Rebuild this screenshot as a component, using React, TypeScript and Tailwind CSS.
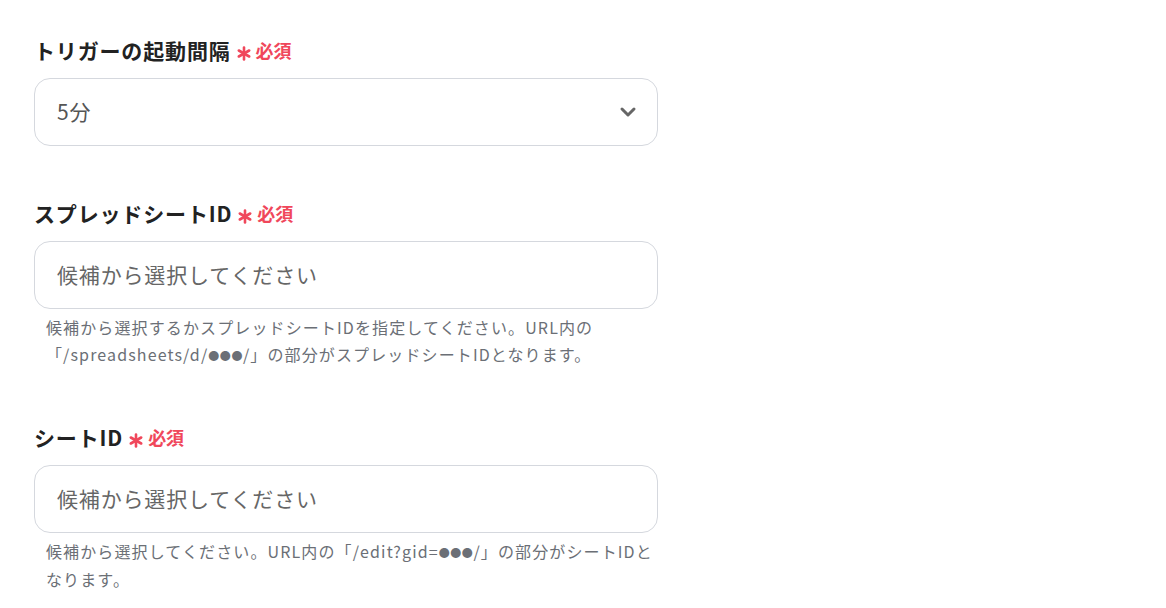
import React from "react";

const font = { fontFamily: '"Noto Sans CJK JP", "Noto Sans", sans-serif' };

function Required() {
  return (
    <span className="ml-[6px] inline-flex items-center gap-[5px] text-[#f0475b]">
      <svg width="14" height="15" viewBox="0 0 14 15" className="mt-[6px]">
        <g stroke="#f0475b" strokeWidth="2.6" strokeLinecap="round">
          <line x1="7" y1="1.5" x2="7" y2="13.5" />
          <line x1="1.8" y1="4.5" x2="12.2" y2="10.5" />
          <line x1="1.8" y1="10.5" x2="12.2" y2="4.5" />
        </g>
      </svg>
      <span className="text-[18px] font-bold leading-none">必須</span>
    </span>
  );
}

function Label({ text }: { text: string }) {
  return (
    <div className="flex items-center h-[30px]">
      <span className="text-[21px] font-bold text-[#222] leading-none tracking-[0.04em]">{text}</span>
      <Required />
    </div>
  );
}

function Field({ value, placeholder, select }: { value?: string; placeholder?: string; select?: boolean }) {
  return (
    <div className="mt-[13px] w-[624px] h-[68px] shrink-0 rounded-[16px] border border-[#d5d8de] bg-white flex items-center pl-[22px] pr-[20px]">
      <span className={"flex-1 text-[21px] tracking-[0.04em] " + (value ? "text-[#555]" : "text-[#666]")}>
        {value ?? placeholder}
      </span>
      {select && (
        <svg width="18" height="12" viewBox="0 0 18 12">
          <path d="M3 3 L9 9 L15 3" fill="none" stroke="#666" strokeWidth="3" strokeLinecap="round" strokeLinejoin="round" />
        </svg>
      )}
    </div>
  );
}

function Dots() {
  return <span className="text-[11px] tracking-[0.05em] align-[1px]">●●●</span>;
}

function Help({ children }: { children: React.ReactNode }) {
  return (
    <div className="mt-[5px] pl-[12px] text-[16px] leading-[27px] text-[#6b6f76] tracking-[0.07em]">
      {children}
    </div>
  );
}

export default function App() {
  return (
    <div style={font} className="w-[1166px] h-[608px] bg-white pl-[34px] pt-[35px]">
      <div className="w-[624px] flex flex-col">
        <Label text="トリガーの起動間隔" />
        <Field value="5分" select />
        <div className="h-[52px]" />
        <Label text="スプレッドシートID" />
        <Field placeholder="候補から選択してください" />
        <Help>
          候補から選択するかスプレッドシートIDを指定してください。URL内の
          <br />
          「/spreadsheets/d/<Dots />/」の部分がスプレッドシートIDとなります。
        </Help>
        <div className="h-[53px]" />
        <Label text="シートID" />
        <Field placeholder="候補から選択してください" />
        <Help>
          候補から選択してください。URL内の「/edit?gid=<Dots />/」の部分がシートIDと
          <br />
          なります。
        </Help>
      </div>
    </div>
  );
}
